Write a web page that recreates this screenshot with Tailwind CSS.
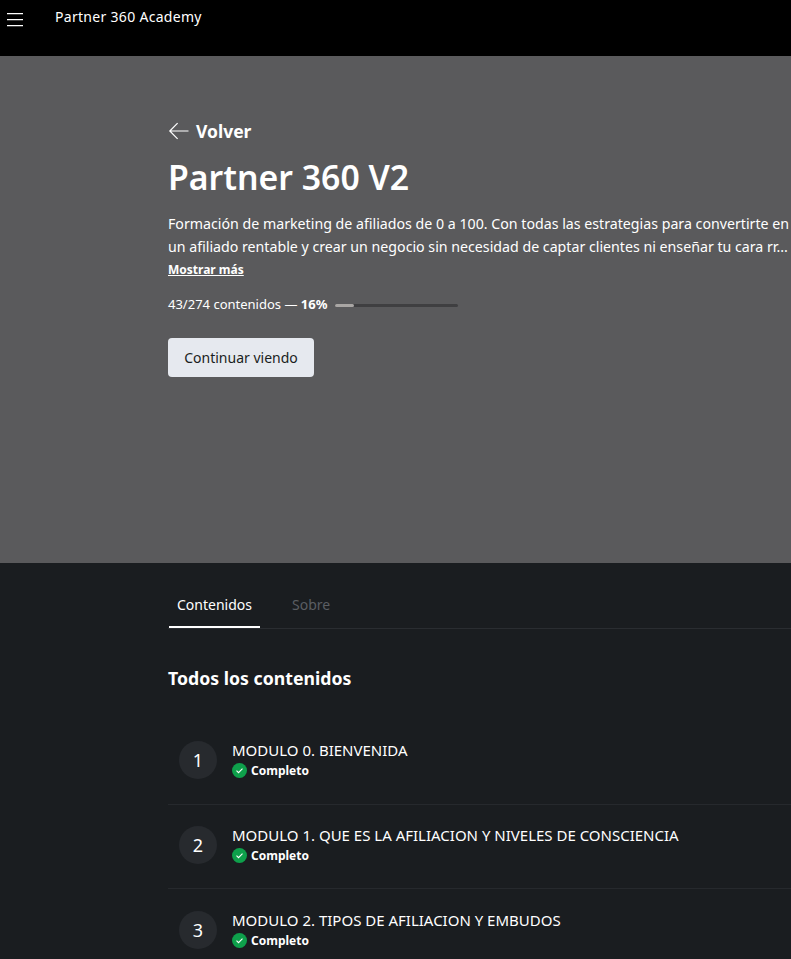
<!DOCTYPE html>
<html lang="en">
<head>
    <meta charset="UTF-8">
    <title>Partner 360 Academy</title>
    <script src="https://cdn.jsdelivr.net/npm/@tailwindcss/browser@4"></script>
</head>
<body class="bg-[#1a1d20] text-white font-['Noto_Sans',sans-serif] overflow-hidden h-[959px]">

    <!-- top bar -->
    <header class="bg-black h-14 flex items-start">
        <button class="w-[30px] pt-[13px] pl-[7px]">
            <svg width="16" height="14" viewBox="0 0 16 14" fill="none" stroke="#fff" stroke-width="1.2"><path d="M0 .6h16M0 6.6h16M0 12.6h16"/></svg>
        </button>
        <span class="ml-[25px] mt-[7px] text-sm leading-5 tracking-[0.3px]">Partner 360 Academy</span>
    </header>

    <!-- hero -->
    <section class="bg-[#5a5a5c] h-[507px] pl-[168px] pt-[63px] overflow-hidden">
        <a class="flex items-center gap-[7px] h-6 font-bold text-[17.5px]">
            <svg width="21" height="18" viewBox="0 0 21 18" fill="none" stroke="#fff" stroke-width="1.2"><path d="M20.5 9H2M9.6 1.2 1.8 9l7.8 7.8"/></svg>
            Volver
        </a>
        <h1 class="mt-[10px] text-[33.8px] leading-[48px] font-semibold">Partner 360 V2</h1>
        <p class="mt-[11px] w-[640px] text-[14.2px] leading-[23px] whitespace-nowrap">Formación de marketing de afiliados de 0 a 100. Con todas las estrategias para convertirte en<br>un afiliado rentable y crear un negocio sin necesidad de captar clientes ni enseñar tu cara rr...</p>
        <a class="block mt-[2px] text-xs leading-5 font-bold underline">Mostrar más</a>
        <div class="mt-[15px] flex items-center h-5 text-[13px]">
            <span>43/274 contenidos — <b>16%</b></span>
            <div class="ml-2 w-[123px] h-[3px] rounded-full bg-[#3f3f41]">
                <div class="w-[19px] h-full rounded-full bg-[#a9a6a4]"></div>
            </div>
        </div>
        <button class="mt-[23px] w-[146px] h-[39px] rounded bg-[#e6e9ef] text-[#1a1d21] text-sm">Continuar viendo</button>
    </section>

    <!-- content -->
    <main class="pl-[168px]">
        <nav class="flex h-[66px] border-b border-[#2a2d31] text-sm">
            <a class="ml-px w-[91px] pt-[32px] flex items-start justify-center border-b-2 border-white">Contenidos</a>
            <a class="ml-[32px] pt-[32px] flex items-start text-[#5b5e63]">Sobre</a>
        </nav>
        <h2 class="mt-[35px] text-[17.7px] leading-7 font-bold">Todos los contenidos</h2>

        <ul class="mt-[28px]">
            <li class="flex items-center h-[84.7px] pb-[4px] border-b border-[#26292d]">
                <span class="ml-[11px] w-[38px] h-[38px] rounded-full bg-[#272a2e] flex items-center justify-center text-lg">1</span>
                <div class="ml-[15px]">
                    <p class="text-[15px] leading-[22px]">MODULO 0. BIENVENIDA</p>
                    <p class="flex items-center gap-1 text-xs leading-5 font-bold">
                        <svg width="15" height="15" viewBox="0 0 15 15"><circle cx="7.5" cy="7.5" r="7.5" fill="#0ea04b"/><path d="m4.5 7.7 2 2 4-4" fill="none" stroke="#fff" stroke-width="1.1"/></svg>
                        Completo
                    </p>
                </div>
            </li>
            <li class="flex items-center h-[84.7px] pb-[4px] border-b border-[#26292d]">
                <span class="ml-[11px] w-[38px] h-[38px] rounded-full bg-[#272a2e] flex items-center justify-center text-lg">2</span>
                <div class="ml-[15px]">
                    <p class="text-[15px] leading-[22px]">MODULO 1. QUE ES LA AFILIACION Y NIVELES DE CONSCIENCIA</p>
                    <p class="flex items-center gap-1 text-xs leading-5 font-bold">
                        <svg width="15" height="15" viewBox="0 0 15 15"><circle cx="7.5" cy="7.5" r="7.5" fill="#0ea04b"/><path d="m4.5 7.7 2 2 4-4" fill="none" stroke="#fff" stroke-width="1.1"/></svg>
                        Completo
                    </p>
                </div>
            </li>
            <li class="flex items-center h-[84.7px] pb-[4px]">
                <span class="ml-[11px] w-[38px] h-[38px] rounded-full bg-[#272a2e] flex items-center justify-center text-lg">3</span>
                <div class="ml-[15px]">
                    <p class="text-[15px] leading-[22px]">MODULO 2. TIPOS DE AFILIACION Y EMBUDOS</p>
                    <p class="flex items-center gap-1 text-xs leading-5 font-bold">
                        <svg width="15" height="15" viewBox="0 0 15 15"><circle cx="7.5" cy="7.5" r="7.5" fill="#0ea04b"/><path d="m4.5 7.7 2 2 4-4" fill="none" stroke="#fff" stroke-width="1.1"/></svg>
                        Completo
                    </p>
                </div>
            </li>
        </ul>
    </main>

</body>
</html>
